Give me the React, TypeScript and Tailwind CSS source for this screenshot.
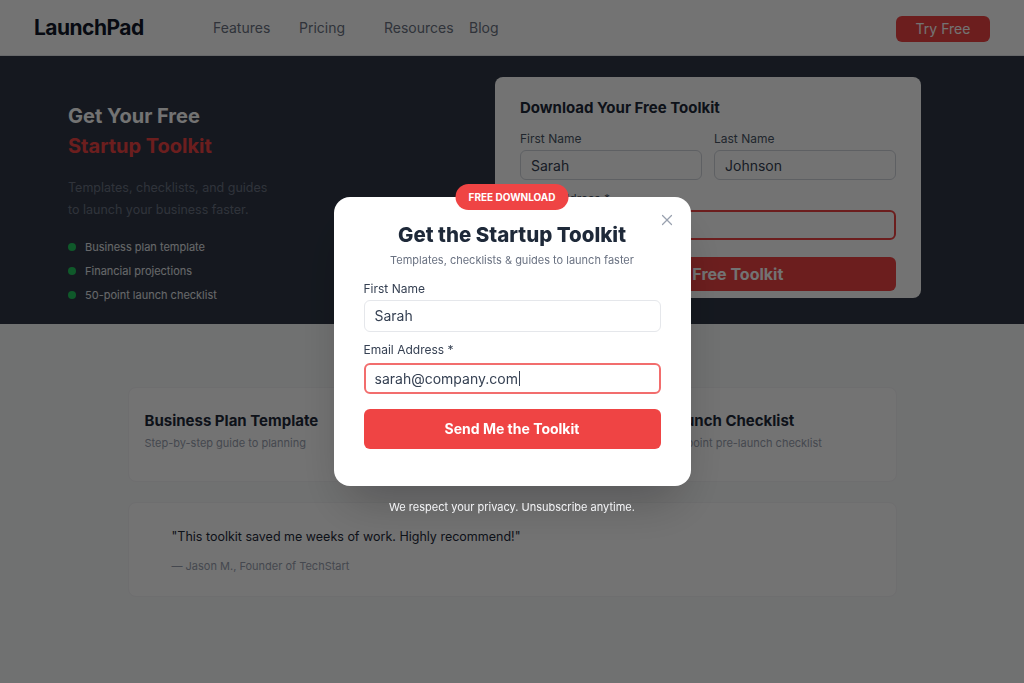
import { X } from 'lucide-react'

const font = { fontFamily: 'Inter, "Noto Sans", sans-serif' }

function Field({ label, value, red }: { label: string; value: string; red?: boolean }) {
  return (
    <div className="flex flex-col">
      <label className="text-[12px] text-gray-600 mb-[3px] leading-[16px]">{label}</label>
      <div
        className={
          'h-[30px] rounded-md bg-white px-[10px] flex items-center text-[14px] text-gray-700 ' +
          (red ? 'border-2 border-[#ef4444]' : 'border border-gray-300')
        }
      >
        {value}
      </div>
    </div>
  )
}

export default function App() {
  return (
    <div className="relative min-h-screen bg-gray-50 overflow-hidden" style={font}>
      {/* Nav */}
      <nav className="h-[56px] bg-white border-b border-gray-200 flex items-center pl-[34px] pr-[34px]">
        <div className="text-[21px] font-bold text-gray-900 tracking-tight w-[179px]">LaunchPad</div>
        <div className="flex items-center text-[14px] text-gray-500">
          <span className="w-[86px]">Features</span>
          <span className="w-[85px]">Pricing</span>
          <span className="w-[85px]">Resources</span>
          <span>Blog</span>
        </div>
        <button className="ml-auto h-[26px] w-[94px] rounded-md bg-[#ef4444] text-white text-[14px] mt-[2px]">
          Try Free
        </button>
      </nav>

      {/* Hero */}
      <section className="h-[268px] bg-[#2f3746] flex pl-[68px] pr-[103px] pt-[21px]">
        <div className="pt-[24px] flex-1">
          <h1 className="text-[20px] font-bold leading-[30px] text-white">Get Your Free</h1>
          <h1 className="text-[20px] font-bold leading-[30px] text-[#ef4444]">Startup Toolkit</h1>
          <p className="mt-[16px] text-[12.5px] leading-[22px] text-gray-500">
            Templates, checklists, and guides
            <br />
            to launch your business faster.
          </p>
          <ul className="mt-[18px] flex flex-col gap-[8px] text-[11px] text-gray-200">
            {['Business plan template', 'Financial projections', '50-point launch checklist'].map(t => (
              <li key={t} className="flex items-center gap-[9px] leading-[16px]">
                <span className="w-[8px] h-[8px] rounded-full bg-[#22c55e]" />
                {t}
              </li>
            ))}
          </ul>
        </div>
        <div className="w-[426px] h-[221px] bg-white rounded-lg px-[25px] pt-[21px]">
          <h2 className="text-[15px] font-bold text-gray-800 leading-[20px]">Download Your Free Toolkit</h2>
          <div className="mt-[13px] grid grid-cols-2 gap-[12px]">
            <Field label="First Name" value="Sarah" />
            <Field label="Last Name" value="Johnson" />
          </div>
          <div className="mt-[11px]">
            <Field label="Email Address *" value="" red />
          </div>
          <button className="mt-[17px] w-full h-[34px] rounded-md bg-[#ef4444] text-white text-[16px] font-bold">
            Get My Free Toolkit
          </button>
        </div>
      </section>

      {/* Resource cards */}
      <section className="max-w-[769px] mx-auto mt-[63px]">
        <div className="grid grid-cols-3 gap-[16px]">
          {[
            ['Business Plan Template', 'Step-by-step guide to planning'],
            ['Financial Projections', '3-year revenue forecast model'],
            ['Launch Checklist', '50-point pre-launch checklist'],
          ].map(([t, s]) => (
            <div key={t} className="h-[95px] rounded-lg bg-white border border-gray-100 px-[16px] pt-[23px]">
              <h3 className="text-[15px] font-bold text-gray-800 leading-[20px]">{t}</h3>
              <p className="mt-[4px] text-[11px] text-gray-400">{s}</p>
            </div>
          ))}
        </div>
        <div className="mt-[20px] h-[95px] rounded-lg bg-white border border-gray-100 px-[43px] pt-[25px]">
          <p className="text-[12.5px] text-gray-800">"This toolkit saved me weeks of work. Highly recommend!"</p>
          <p className="mt-[11px] text-[11px] text-gray-400">— Jason M., Founder of TechStart</p>
        </div>
      </section>

      {/* Modal overlay */}
      <div className="fixed inset-0 bg-black/55 flex items-center justify-center">
        <div className="relative w-[357px] h-[289px] bg-white rounded-2xl shadow-2xl px-[30px] pt-[25px]">
          <span className="absolute -top-[13px] left-1/2 -translate-x-1/2 h-[26px] px-[13px] rounded-full bg-[#ef4444] text-white text-[10px] font-bold flex items-center whitespace-nowrap">
            FREE DOWNLOAD
          </span>
          <button className="absolute top-[14px] right-[15px] text-gray-400">
            <X size={18} strokeWidth={1.6} />
          </button>
          <h2 className="text-center text-[20.5px] font-extrabold text-gray-800 leading-[26px]">
            Get the Startup Toolkit
          </h2>
          <p className="text-center text-[11px] text-gray-500 mt-[4px]">
            Templates, checklists &amp; guides to launch faster
          </p>
          <div className="mt-[12px] flex flex-col">
            <label className="text-[12px] text-gray-700 leading-[16px] mb-[3px]">First Name</label>
            <div className="h-[32px] rounded-md border border-gray-200 px-[10px] flex items-center text-[14px] text-gray-700">
              Sarah
            </div>
            <label className="mt-[10px] text-[12px] text-gray-700 leading-[16px] mb-[5px]">Email Address *</label>
            <div className="h-[31px] rounded-md border-2 border-[#f26d6d] px-[9px] flex items-center text-[14px] text-gray-700">
              sarah@company.com<span className="w-px h-[15px] bg-gray-700 ml-[1px]" />
            </div>
            <button className="mt-[15px] h-[40px] rounded-md bg-[#ef4444] text-white text-[14px] font-bold">
              Send Me the Toolkit
            </button>
          </div>
          <p className="absolute left-0 right-0 top-full mt-[13px] text-center text-[11px] text-gray-100">
            We respect your privacy. Unsubscribe anytime.
          </p>
        </div>
      </div>
    </div>
  )
}
